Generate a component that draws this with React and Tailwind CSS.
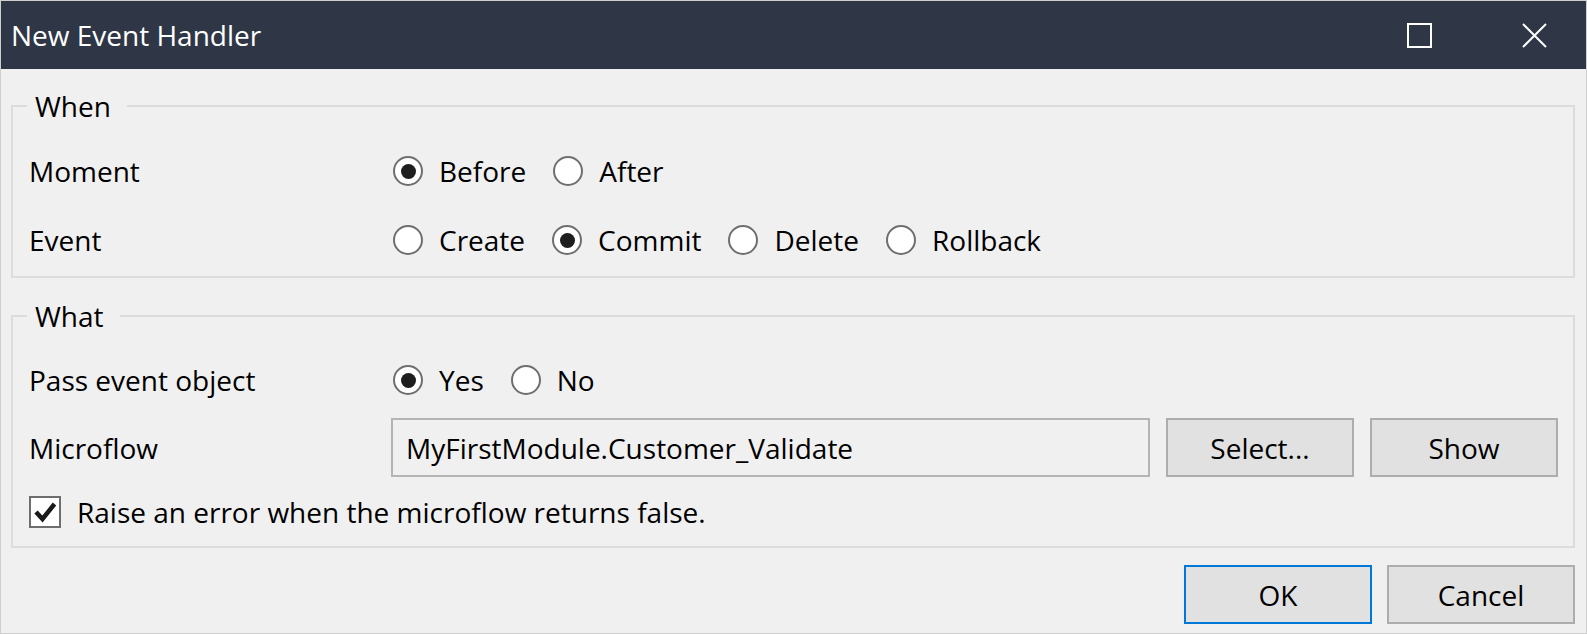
import React from "react";

function Radio({ checked, label }) {
  return (
    <div className="flex items-center gap-[16px]">
      <span className="w-[30px] h-[30px] rounded-full border-2 border-[#6e6e6e] bg-white flex items-center justify-center shrink-0">
        {checked && <span className="w-[15px] h-[15px] rounded-full bg-[#1e1e1e]" />}
      </span>
      <span>{label}</span>
    </div>
  );
}

function Row({ label, children, height = "h-[40px]" }) {
  return (
    <div className={`flex items-center ${height}`}>
      <div className="w-[364px] shrink-0">{label}</div>
      <div className="flex-1 flex items-center gap-[27px] h-full">{children}</div>
    </div>
  );
}

function Button({ children, focused }) {
  return (
    <button
      className={`w-[188px] h-[59px] border-2 bg-[#e1e1e1] text-[28px] leading-none text-black ${
        focused ? "border-[#0078d7]" : "border-[#adadad]"
      }`}
    >
      {children}
    </button>
  );
}

export default function App() {
  return (
    <div className="w-[1587px] h-[634px] border border-[#cfcfcf] bg-[#f0f0f0] flex flex-col font-['Open_Sans',sans-serif] text-[28px] text-black overflow-hidden">
      {/* title bar */}
      <div className="h-[68px] bg-[#2f3646] flex items-center text-white shrink-0">
        <div className="pl-[10px] flex-1 leading-none">New Event Handler</div>
        <svg width="25" height="25" viewBox="0 0 25 25" className="mr-[90px]">
          <rect x="1" y="1" width="23" height="23" fill="none" stroke="#fff" strokeWidth="2" />
        </svg>
        <svg width="25" height="25" viewBox="0 0 25 25" className="mr-[39px]">
          <path d="M1 1 L24 24 M24 1 L1 24" stroke="#fff" strokeWidth="2" />
        </svg>
      </div>

      <div className="flex-1 flex flex-col pt-[18px] pl-[10px] pr-[11px] pb-[9px]">
        {/* When */}
        <fieldset className="border-2 border-[#dcdcdc] pl-[16px] pr-[15px] pt-[26px] pb-[16px]">
          <legend className="-ml-[2px] pl-[8px] pr-[16px] leading-[38px]">When</legend>
          <div className="flex flex-col gap-[29px]">
            <Row label="Moment">
              <Radio checked label="Before" />
              <Radio label="After" />
            </Row>
            <Row label="Event">
              <Radio label="Create" />
              <Radio checked label="Commit" />
              <Radio label="Delete" />
              <Radio label="Rollback" />
            </Row>
          </div>
        </fieldset>

        {/* What */}
        <fieldset className="mt-[19px] border-2 border-[#dcdcdc] pl-[16px] pr-[15px] pt-[25px] pb-[18px]">
          <legend className="-ml-[2px] pl-[8px] pr-[16px] leading-[38px]">What</legend>
          <div className="flex flex-col">
            <Row label="Pass event object">
              <Radio checked label="Yes" />
              <Radio label="No" />
            </Row>
            <div className="flex items-center h-[59px] mt-[18px]">
              <div className="w-[362px] shrink-0">Microflow</div>
              <div className="flex-1 h-full border-2 border-[#b4b4b4] bg-[#f0f0f0] flex items-center pl-[13px]">
                MyFirstModule.Customer_Validate
              </div>
              <div className="ml-[16px] flex gap-[16px]">
                <Button>Select...</Button>
                <Button>Show</Button>
              </div>
            </div>
            <div className="flex items-center gap-[16px] h-[32px] mt-[19px]">
              <span className="w-[32px] h-[32px] border-2 border-[#6e6e6e] bg-white flex items-center justify-center shrink-0">
                <svg width="28" height="28" viewBox="0 0 28 28">
                  <path d="M5 14 L11.5 21 L23.5 6" fill="none" stroke="#1a1a1a" strokeWidth="4.5" />
                </svg>
              </span>
              <span>Raise an error when the microflow returns false.</span>
            </div>
          </div>
        </fieldset>

        <div className="mt-[17px] flex justify-end gap-[15px]">
          <Button focused>OK</Button>
          <Button>Cancel</Button>
        </div>
      </div>
    </div>
  );
}
